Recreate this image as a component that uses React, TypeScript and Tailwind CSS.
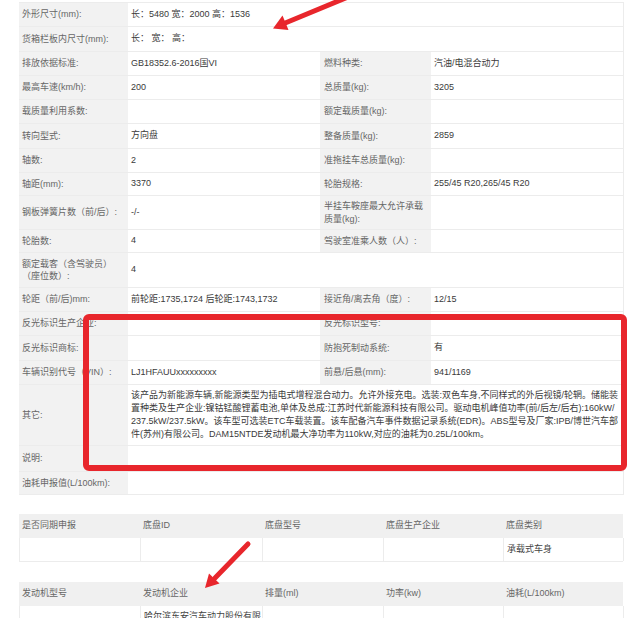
import React from "react";

const FONT = { fontFamily: '"Liberation Sans", "Noto Sans CJK SC", sans-serif' };

function L({ children }: { children?: React.ReactNode }) {
  return (
    <div className="flex items-center bg-[#f2f2f2] pl-[3px] text-[#666] leading-[12.5px]">{children}</div>
  );
}
function L2({ children }: { children?: React.ReactNode }) {
  return (
    <div className="flex items-center bg-[#f2f2f2] pl-[4px] text-[#666] leading-[12.5px]">{children}</div>
  );
}
function V({ children, span }: { children?: React.ReactNode; span?: string }) {
  return <div className={`flex items-center pl-[3px] text-[#3a3a3a] ${span ?? ""}`}>{children}</div>;
}

function Row4({ h, a, b, c, d }: { h: string; a: React.ReactNode; b?: React.ReactNode; c: React.ReactNode; d?: React.ReactNode }) {
  return (
    <div className={`grid grid-cols-[109px_192px_111px_192px] border-b border-[#ececec] ${h}`}>
      <L>{a}</L>
      <V>{b}</V>
      <L2>{c}</L2>
      <V>{d}</V>
    </div>
  );
}

function RowSpan({ h, a, b }: { h: string; a: React.ReactNode; b?: React.ReactNode }) {
  return (
    <div className={`grid grid-cols-[109px_192px_111px_192px] border-b border-[#ececec] ${h}`}>
      <L>{a}</L>
      <V span="col-span-3">{b}</V>
    </div>
  );
}

const other = [
  "该产品为新能源车辆,新能源类型为插电式增程混合动力。允许外接充电。选装:双色车身,不同样式的外后视镜/轮辋。储能装",
  "置种类及生产企业:镍钴锰酸锂蓄电池,单体及总成:江苏时代新能源科技有限公司。驱动电机峰值功率(前/后左/后右):160kW/",
  "237.5kW/237.5kW。该车型可选装ETC车载装置。该车配备汽车事件数据记录系统(EDR)。ABS型号及厂家:IPB/博世汽车部",
  "件(苏州)有限公司。DAM15NTDE发动机最大净功率为110kW,对应的油耗为0.25L/100km。",
];

function SubTable({ heads, cells, dataH, children }: { heads: string[]; cells?: string[]; dataH: string; children?: React.ReactNode }) {
  return (
    <div className="ml-[19px] w-[604px]">
      <div className="grid h-[24px] grid-cols-[121px_122px_121px_120px_120px] bg-[#f0f0f0] text-[#666]">
        {heads.map((t, i) => (
          <div key={i} className="flex items-center pl-[3px]">
            {t}
          </div>
        ))}
      </div>
      {children ?? (
        <div className={`grid grid-cols-[121px_122px_121px_120px_120px] border-b border-l border-[#ececec] ${dataH}`}>
          {(cells ?? []).map((t, i) => (
            <div key={i} className="flex items-center border-r border-[#ececec] pl-[3px] text-[#444]">
              {t}
            </div>
          ))}
        </div>
      )}
    </div>
  );
}

export default function App() {
  return (
    <div className="relative h-[618px] w-[636px] overflow-hidden bg-white text-[9px]" style={FONT}>
      <div className="pt-[2px]">
        <div className="ml-[19px] w-[605px] border-r border-t border-[#ececec]">
          <RowSpan h="h-[24px]" a="外形尺寸(mm):" b="长：5480 宽：2000 高：1536" />
          <RowSpan h="h-[25px]" a="货箱栏板内尺寸(mm):" b="长： 宽： 高：" />
          <Row4 h="h-[24px]" a="排放依据标准:" b="GB18352.6-2016国VI" c="燃料种类:" d="汽油/电混合动力" />
          <Row4 h="h-[24px]" a="最高车速(km/h):" b="200" c="总质量(kg):" d="3205" />
          <Row4 h="h-[24px]" a="载质量利用系数:" c="额定载质量(kg):" />
          <Row4 h="h-[25px]" a="转向型式:" b="方向盘" c="整备质量(kg):" d="2859" />
          <Row4 h="h-[24px]" a="轴数:" b="2" c="准拖挂车总质量(kg):" />
          <Row4 h="h-[23px]" a="轴距(mm):" b="3370" c="轮胎规格:" d="255/45 R20,265/45 R20" />
          <Row4
            h="h-[34px]"
            a="钢板弹簧片数（前/后）:"
            b="-/-"
            c={
              <span>
                半挂车鞍座最大允许承载
                <br />
                质量(kg):
              </span>
            }
          />
          <Row4 h="h-[23px]" a="轮胎数:" b="4" c="驾驶室准乘人数（人）:" />
          <div className="grid h-[35px] grid-cols-[109px_192px_111px_192px] border-b border-[#ececec]">
            <L>
              <span>
                额定载客（含驾驶员）
                <br />
                （座位数）:
              </span>
            </L>
            <V>4</V>
            <div className="col-span-2" />
          </div>
          <Row4 h="h-[24px]" a="轮距（前/后)mm:" b="前轮距:1735,1724 后轮距:1743,1732" c="接近角/离去角（度）:" d="12/15" />
          <Row4 h="h-[24px]" a="反光标识生产企业:" c="反光标识型号:" />
          <Row4 h="h-[25px]" a="反光标识商标:" c="防抱死制动系统:" d="有" />
          <Row4 h="h-[24px]" a="车辆识别代号（VIN）:" b="LJ1HFAUUxxxxxxxxx" c="前悬/后悬(mm):" d="941/1169" />
          <RowSpan
            h="h-[61px]"
            a="其它:"
            b={
              <div className="leading-[12.8px]">
                {other.map((l, i) => (
                  <div key={i} className="whitespace-nowrap">
                    {l}
                  </div>
                ))}
              </div>
            }
          />
          <RowSpan h="h-[26px]" a="说明:" />
          <RowSpan h="h-[23px]" a="油耗申报值(L/100km):" />
        </div>

        <div className="mt-[19px]">
          <SubTable
            heads={["是否同期申报", "底盘ID", "底盘型号", "底盘生产企业", "底盘类别"]}
            cells={["", "", "", "", "承载式车身"]}
            dataH="h-[24px]"
          />
        </div>

        <div className="mt-[20px]">
          <SubTable heads={["发动机型号", "发动机企业", "排量(ml)", "功率(kw)", "油耗(L/100km)"]} dataH="h-[30px]">
            <div className="grid h-[30px] grid-cols-[121px_122px_121px_120px_120px] border-l border-[#ececec]">
              <div className="border-r border-[#ececec]" />
              <div className="border-r border-[#ececec] pl-[3px] pt-[4px] leading-[12.8px] text-[#444]">
                哈尔滨东安汽车动力股份有限公司
              </div>
              <div className="border-r border-[#ececec]" />
              <div className="border-r border-[#ececec]" />
              <div className="border-r border-[#ececec]" />
            </div>
          </SubTable>
        </div>
      </div>

      <svg className="pointer-events-none absolute inset-0" width="636" height="618" viewBox="0 0 636 618">
        <rect x="86" y="317" width="538" height="151" rx="3" fill="none" stroke="#e8262c" strokeWidth="6" />
        <line x1="348" y1="-3" x2="284" y2="23.5" stroke="#e8262c" strokeWidth="5" strokeLinecap="round" />
        <polygon points="273,28.5 282.5,15.5 288.5,30" fill="#e8262c" />
        <line x1="248" y1="544" x2="215" y2="578" stroke="#e8262c" strokeWidth="5" strokeLinecap="round" />
        <polygon points="205,588 209,573.5 219.5,583.5" fill="#e8262c" />
      </svg>
    </div>
  );
}
